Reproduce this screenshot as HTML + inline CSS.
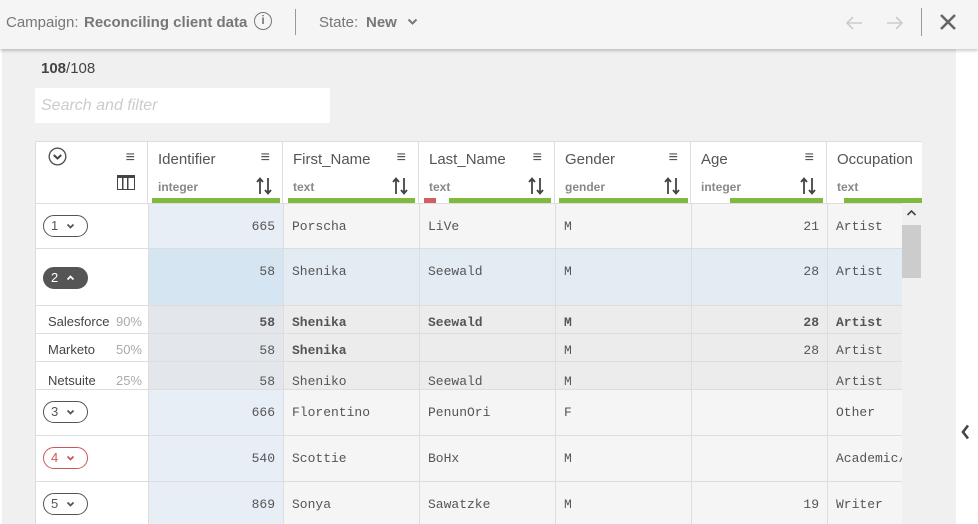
<!DOCTYPE html>
<html><head><style>
*{box-sizing:border-box;margin:0;padding:0}
body{width:978px;height:524px;overflow:hidden;background:#fff;font-family:"Liberation Sans",sans-serif;position:relative}
.top{position:absolute;left:0;top:0;width:978px;height:49px;background:#f5f5f5;box-shadow:0 2px 3px rgba(0,0,0,.2);z-index:5;color:#777;font-size:15px}
.top span{position:absolute;top:14px}
.panel{position:absolute;left:2px;top:49px;width:954px;height:475px;background:#f0f0f0}
.abs{position:absolute}
.hd{position:absolute;top:141px;height:62px;background:#fff;border-right:1px solid #ddd;border-top:1px solid #ddd}
.hd .t{position:absolute;left:10px;top:9px;font-size:15px;color:#555}
.hd .ty{position:absolute;left:10px;top:38px;font-size:12px;font-weight:bold;color:#888}
.hd .m{position:absolute;right:12px;top:7px;font-size:16px;color:#555}
.hd .s{position:absolute;right:10px;top:35px}
.g{position:absolute;top:198px;height:5px;background:#7fba3f}
.c{position:absolute;font-family:"Liberation Mono",monospace;font-size:13px;color:#555;border-right:1px solid #ddd;border-bottom:1px solid #ddd;padding:0 8px}
.r{text-align:right}
.pill{position:absolute;left:7px;width:45px;height:22px;border:1.5px solid #555;border-radius:11px;font-size:13px;color:#555;padding-left:7px;line-height:19px}
.pill svg{position:absolute;left:22px;top:6px}
.lab{position:absolute;left:0;width:113px;background:#fff;border-right:1px solid #ddd;border-bottom:1px solid #ddd}
</style></head><body>
<div class="top">
<span style="left:6px">Campaign:</span>
<span style="left:84px;font-weight:bold">Reconciling client data</span>
<span style="left:254px;top:12px;width:18px;height:18px;border:1.5px solid #777;border-radius:50%;font-size:12px;text-align:center;line-height:15px;font-weight:bold">i</span>
<div class="abs" style="left:295px;top:9px;width:1px;height:26px;background:#999"></div>
<span style="left:319px">State:</span>
<span style="left:366px;font-weight:bold">New</span>
<svg class="abs" style="left:407px;top:18px" width="11" height="8" viewBox="0 0 11 8"><path d="M1.5 1.5 L5.5 5.5 L9.5 1.5" fill="none" stroke="#777" stroke-width="2"/></svg>
<svg class="abs" style="left:845px;top:15px" width="18" height="16" viewBox="0 0 18 16"><path d="M17 8H2M8 2L2 8L8 14" fill="none" stroke="#ccc" stroke-width="1.6"/></svg>
<svg class="abs" style="left:886px;top:15px" width="18" height="16" viewBox="0 0 18 16"><path d="M1 8H16M10 2L16 8L10 14" fill="none" stroke="#ccc" stroke-width="1.6"/></svg>
<div class="abs" style="left:921px;top:8px;width:1px;height:28px;background:#999"></div>
<svg class="abs" style="left:939px;top:13px" width="18" height="18" viewBox="0 0 18 18"><path d="M2 2L16 16M16 2L2 16" stroke="#666" stroke-width="2.6"/></svg>
</div>
<div class="panel"></div>
<div class="abs" style="left:41px;top:60px;font-size:15px;color:#444"><b>108</b>/108</div>
<div class="abs" style="left:35px;top:88px;width:295px;height:35px;background:#fff;font-size:16px;font-style:italic;color:#ccc;padding:9px 6px">Search and filter</div>

<div class="hd" style="left:35px;width:113px;border-left:1px solid #ddd">
<svg class="abs" style="left:12px;top:5px" width="19" height="19" viewBox="0 0 19 19"><circle cx="9.5" cy="9.5" r="8.3" fill="none" stroke="#555" stroke-width="1.4"/><path d="M5.8 8 L9.5 11.5 L13.2 8" fill="none" stroke="#444" stroke-width="2"/></svg>
<div class="m">&#8801;</div>
<div class="abs" style="right:12px;top:33px;width:18px;height:15px;border:1.5px solid #444;border-top-width:3px;background:linear-gradient(90deg,transparent 4px,#444 4px,#444 5.5px,transparent 5.5px,transparent 9px,#444 9px,#444 10.5px,transparent 10.5px)"></div>
</div>
<svg width="0" height="0" style="position:absolute"><defs><symbol id="sa" viewBox="0 0 16 18"><path d="M4 17V2M1 5L4 1.5L7 5M12 1V16M9 13L12 16.5L15 13" fill="none" stroke="#444" stroke-width="1.8"/></symbol></defs></svg>
<div class="hd" style="left:148px;width:135px"><div class="t">Identifier</div><div class="ty">integer</div><div class="m">&#8801;</div><svg class="s" width="16" height="18"><use href="#sa"/></svg></div>
<div class="hd" style="left:283px;width:136px"><div class="t">First_Name</div><div class="ty">text</div><div class="m">&#8801;</div><svg class="s" width="16" height="18"><use href="#sa"/></svg></div>
<div class="hd" style="left:419px;width:136px"><div class="t">Last_Name</div><div class="ty">text</div><div class="m">&#8801;</div><svg class="s" width="16" height="18"><use href="#sa"/></svg></div>
<div class="hd" style="left:555px;width:136px"><div class="t">Gender</div><div class="ty">gender</div><div class="m">&#8801;</div><svg class="s" width="16" height="18"><use href="#sa"/></svg></div>
<div class="hd" style="left:691px;width:136px"><div class="t">Age</div><div class="ty">integer</div><div class="m">&#8801;</div><svg class="s" width="16" height="18"><use href="#sa"/></svg></div>
<div class="hd" style="left:827px;width:95px;border-right:none"><div class="t">Occupation</div><div class="ty">text</div></div>
<div class="g" style="left:152px;width:128px"></div>
<div class="g" style="left:288px;width:127px"></div>
<div class="g" style="left:424px;width:12px;background:#d06060"></div>
<div class="g" style="left:449px;width:102px"></div>
<div class="g" style="left:559px;width:129px"></div>
<div class="g" style="left:730px;width:93px"></div>
<div class="g" style="left:844px;width:78px"></div>

<div id="rows" class="abs" style="left:35px;top:203px;width:867px;height:321px;overflow:hidden;border-left:1px solid #ddd;border-top:1px solid #ddd"></div>
<div class="abs" style="left:902px;top:203px;width:20px;height:321px;background:#f0f0f0"></div>
<svg class="abs" style="left:906px;top:209px" width="11" height="8" viewBox="0 0 11 8"><path d="M1.5 6 L5.5 2 L9.5 6" fill="none" stroke="#444" stroke-width="1.6"/></svg>
<div class="abs" style="left:902px;top:225px;width:19px;height:53px;background:#ccc"></div>
<svg class="abs" style="left:961px;top:424px" width="9" height="16" viewBox="0 0 9 16"><path d="M7 1.5 L2 8 L7 14.5" fill="none" stroke="#444" stroke-width="2.6"/></svg>

<script>
const cols=[[113,135],[248,136],[384,136],[520,136],[656,136],[792,96]];
const rows=[
{y:0,h:45,pill:'1',v:['665','Porscha','LiVe','M','21','Artist'],bg:'#f5f5f5',id:'#e8eef5'},
{y:45,h:57,pill:'2',dark:1,v:['58','Shenika','Seewald','M','28','Artist'],bg:'#e3ebf3',id:'#d6e5f2',top:1},
{y:102,h:28,lab:['Salesforce','90%'],v:['58','Shenika','Seewald','M','28','Artist'],bold:[1,1,1,1,1,1],bg:'#ececec',id:'#e3e7ec',sub:1},
{y:130,h:28,lab:['Marketo','50%'],v:['58','Shenika','','M','28','Artist'],bold:[0,1],bg:'#ececec',id:'#e3e7ec',sub:1},
{y:158,h:28,lab:['Netsuite','25%'],v:['58','Sheniko','Seewald','M','','Artist'],bg:'#ececec',id:'#e3e7ec',sub:1,low:1},
{y:186,h:46,pill:'3',v:['666','Florentino','PenunOri','F','','Other'],bg:'#f5f5f5',id:'#e8eef5'},
{y:232,h:46,pill:'4',red:1,v:['540','Scottie','BoHx','M','','Academic/'],bg:'#f5f5f5',id:'#e8eef5'},
{y:278,h:46,pill:'5',v:['869','Sonya','Sawatzke','M','19','Writer'],bg:'#f5f5f5',id:'#e8eef5'}];
let h='';
for(const r of rows){
 let ty=r.top?15:(r.sub?(r.low?12:9):15);
 h+=`<div class="lab" style="top:${r.y}px;height:${r.h}px">`;
 if(r.pill){let col=r.dark?'#fff':(r.red?'#d05555':'#555');let st=r.dark?'background:#555;color:#fff;border-color:#555':(r.red?'border-color:#d05555;color:#d05555':'');
  const p=r.dark?'M1.5 5.5 L4.5 2.5 L7.5 5.5':'M1.5 2.5 L4.5 5.5 L7.5 2.5';
  h+=`<div class="pill" style="top:${r.top?18:11}px;${st}">${r.pill}<svg width="9" height="8" viewBox="0 0 9 8"><path d="${p}" fill="none" stroke="${col}" stroke-width="1.8"/></svg></div>`;}
 else h+=`<div class="abs" style="left:12px;top:${ty-1}px;font-size:13px;color:#444">${r.lab[0]}</div><div class="abs" style="right:6px;top:${ty-1}px;font-size:13px;color:#aaa">${r.lab[1]}</div>`;
 h+='</div>';
 cols.forEach((c,i)=>{const b=r.bold&&r.bold[i]?'font-weight:bold;':'';
  h+=`<div class="c ${i==0||i==4?'r':''}" style="left:${c[0]}px;top:${r.y}px;width:${c[1]}px;height:${r.h}px;background:${i==0?r.id:r.bg};padding-top:${ty}px;${b}">${r.v[i]}</div>`;});
}
document.getElementById('rows').innerHTML=h;
</script>
</body></html>
